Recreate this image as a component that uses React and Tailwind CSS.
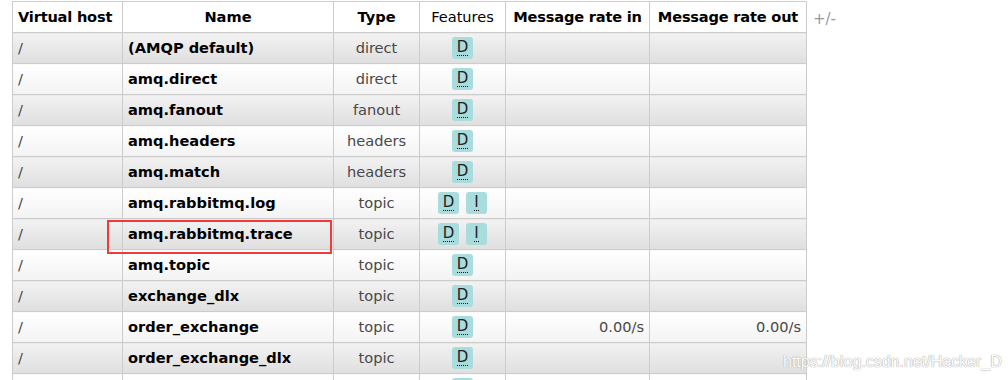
import React from "react";

// ── Datos de exchanges ────────────────────────────────────────────────────────
const ROWS = [
  { name: "(AMQP default)", type: "direct", features: ["D"] },
  { name: "amq.direct", type: "direct", features: ["D"] },
  { name: "amq.fanout", type: "fanout", features: ["D"] },
  { name: "amq.headers", type: "headers", features: ["D"] },
  { name: "amq.match", type: "headers", features: ["D"] },
  { name: "amq.rabbitmq.log", type: "topic", features: ["D", "I"] },
  { name: "amq.rabbitmq.trace", type: "topic", features: ["D", "I"], marked: true },
  { name: "amq.topic", type: "topic", features: ["D"] },
  { name: "exchange_dlx", type: "topic", features: ["D"] },
  { name: "order_exchange", type: "topic", features: ["D"], rateIn: "0.00/s", rateOut: "0.00/s" },
  { name: "order_exchange_dlx", type: "topic", features: ["D"] },
  { name: "order_queue", type: "topic", features: ["D"] },
];

const FONT = "font-['Verdana','DejaVu_Sans',sans-serif]";

const Badge = ({ letter }) => (
  <span className="inline-flex items-center justify-center h-[22px] min-w-[21px] px-[4px] rounded-[3px] bg-[#a9dcdd] text-[#222] text-[15px] leading-none">
    <span className="border-b border-dotted border-[#111] leading-[15px]">{letter}</span>
  </span>
);

export default function App() {
  const th = "border border-[#cccccc] h-[31px] px-[5px] text-[14.6px] text-black whitespace-nowrap";
  return (
    <div className={`relative w-[1008px] h-[380px] overflow-hidden bg-white ${FONT}`}>
      <div className="flex items-start pl-[12px] pt-[1px]">
        <table className="table-fixed border-collapse w-[794px]">
          <colgroup>
            <col className="w-[110px]" />
            <col className="w-[211px]" />
            <col className="w-[86px]" />
            <col className="w-[86px]" />
            <col className="w-[144px]" />
            <col className="w-[157px]" />
          </colgroup>
          <thead>
            <tr className="bg-white">
              <th className={`${th} font-bold text-left tracking-[-0.2px]`}>Virtual host</th>
              <th className={`${th} font-bold text-center`}>Name</th>
              <th className={`${th} font-bold text-center`}>Type</th>
              <th className={`${th} font-normal text-center`}>Features</th>
              <th className={`${th} font-bold text-center tracking-[-0.2px]`}>Message rate in</th>
              <th className={`${th} font-bold text-center tracking-[-0.2px]`}>Message rate out</th>
            </tr>
          </thead>
          <tbody>
            {ROWS.map((r, i) => {
              const bg =
                i % 2 === 0
                  ? "bg-linear-to-b from-[#f2f2f2] to-[#dfdfdf]"
                  : "bg-linear-to-b from-[#ffffff] to-[#f3f3f3]";
              const td = `border border-[#cccccc] h-[31px] px-[5px] text-[14.6px] whitespace-nowrap ${bg}`;
              return (
                <tr key={r.name}>
                  <td className={`${td} text-[#484848]`}>/</td>
                  <td className={`${td} relative font-bold text-black`}>
                    {r.name}
                    {r.marked && (
                      <span className="absolute z-10 left-[-16px] top-[1px] w-[225px] h-[34px] border-2 border-[#ef3b3b]" />
                    )}
                  </td>
                  <td className={`${td} text-center text-[#484848]`}>{r.type}</td>
                  <td className={`${td} text-center`}>
                    <div className="flex justify-center gap-[7px]">
                      {r.features.map((f) => (
                        <Badge key={f} letter={f} />
                      ))}
                    </div>
                  </td>
                  <td className={`${td} text-right text-[#484848]`}>{r.rateIn}</td>
                  <td className={`${td} text-right text-[#484848]`}>{r.rateOut}</td>
                </tr>
              );
            })}
          </tbody>
        </table>
        <span className="ml-[6px] mt-[7px] text-[15px] text-[#999999]">+/-</span>
      </div>

      {/* marca de agua */}
      <span className="absolute left-[783px] top-[350px] text-[16px] text-white font-['Liberation_Sans',Arial,sans-serif] [text-shadow:0_0_1px_#999,0_0_1px_#aaa]">
        https://blog.csdn.net/Hacker_D
      </span>
    </div>
  );
}
